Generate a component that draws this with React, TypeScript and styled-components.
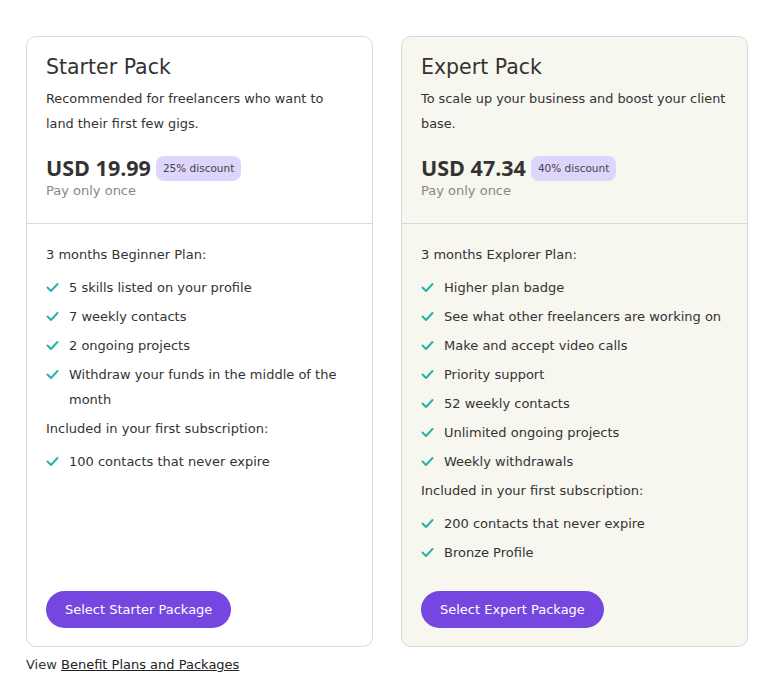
import React from "react";
import styled, { createGlobalStyle } from "styled-components";

const Global = createGlobalStyle`
  html, body { margin: 0; padding: 0; background: #ffffff; }
  body { font-family: "DejaVu Sans", "Open Sans", sans-serif; color: #333; }
  * { box-sizing: border-box; }
`;

const Page = styled.div`
  padding: 36px 30px 0 26px;
  width: 778px;
`;

const Cards = styled.div`
  display: grid;
  grid-template-columns: 347px 347px;
  column-gap: 28px;
`;

const Card = styled.div<{ $tint?: boolean }>`
  display: flex;
  flex-direction: column;
  height: 611px;
  border: 1px solid #d9d9d9;
  border-radius: 10px;
  background: ${(p) => (p.$tint ? "#f7f6ef" : "#ffffff")};
`;

const Head = styled.div`
  padding: 16px 19px 22px;
  border-bottom: 1px solid #d9d9d9;
`;

const Title = styled.h2`
  margin: 0;
  font-size: 20.5px;
  font-weight: 400;
  line-height: 28px;
  color: #333;
`;

const Desc = styled.p`
  margin: 5px 0 0;
  font-size: 12.85px;
  line-height: 25px;
  color: #333;
`;

const PriceRow = styled.div`
  display: flex;
  align-items: center;
  gap: 5px;
  margin-top: 19px;
`;

const Price = styled.span`
  font-family: "Open Sans", sans-serif;
  font-size: 21.5px;
  font-weight: 700;
  color: #333;
  line-height: 26px;
`;

const Badge = styled.span`
  background: #ddd5fc;
  border-radius: 8px;
  padding: 4px 7px;
  font-size: 10.5px;
  line-height: 17px;
  color: #444;
`;

const Sub = styled.div`
  font-size: 13px;
  color: #888;
  line-height: 20px;
`;

const Body = styled.div`
  flex: 1;
  display: flex;
  flex-direction: column;
  padding: 18px 19px 18px;
`;

const Section = styled.div`
  font-size: 13px;
  line-height: 25px;
  color: #333;
  margin-bottom: 8px;
`;

const List = styled.ul`
  list-style: none;
  margin: 0 0 4px;
  padding: 0;
  display: flex;
  flex-direction: column;
  gap: 4px;
`;

const Item = styled.li`
  display: flex;
  gap: 10px;
  font-size: 13px;
  line-height: 25px;
  color: #333;
`;

const Check = styled.svg`
  flex: none;
  width: 13px;
  height: 25px;
`;

const Spacer = styled.div`
  flex: 1;
`;

const Button = styled.button`
  align-self: flex-start;
  background: #7546e0;
  color: #fff;
  border: none;
  border-radius: 19px;
  height: 37px;
  padding: 0 19px;
  font-family: inherit;
  font-size: 13px;
  font-weight: 400;
`;

const Footer = styled.div`
  margin-top: 8px;
  font-size: 13px;
  color: #333;
  line-height: 20px;
`;

const Link = styled.a`
  color: #222;
  text-decoration: underline;
`;

const Tick = () => (
  <Check viewBox="0 0 13 25">
    <path d="M1.5 12.5 L5 16 L11.5 9" fill="none" stroke="#26b3a8" strokeWidth="2" strokeLinecap="round" strokeLinejoin="round" />
  </Check>
);

type Plan = {
  title: string;
  desc: string;
  price: string;
  discount: string;
  section: string;
  items: string[];
  extras: string[];
  button: string;
  tint?: boolean;
};

const plans: Plan[] = [
  {
    title: "Starter Pack",
    desc: "Recommended for freelancers who want to land their first few gigs.",
    price: "USD 19.99",
    discount: "25% discount",
    section: "3 months Beginner Plan:",
    items: [
      "5 skills listed on your profile",
      "7 weekly contacts",
      "2 ongoing projects",
      "Withdraw your funds in the middle of the month",
    ],
    extras: ["100 contacts that never expire"],
    button: "Select Starter Package",
  },
  {
    title: "Expert Pack",
    desc: "To scale up your business and boost your client base.",
    price: "USD 47.34",
    discount: "40% discount",
    section: "3 months Explorer Plan:",
    items: [
      "Higher plan badge",
      "See what other freelancers are working on",
      "Make and accept video calls",
      "Priority support",
      "52 weekly contacts",
      "Unlimited ongoing projects",
      "Weekly withdrawals",
    ],
    extras: ["200 contacts that never expire", "Bronze Profile"],
    button: "Select Expert Package",
    tint: true,
  },
];

export default function App() {
  return (
    <Page>
      <Global />
      <Cards>
        {plans.map((p) => (
          <Card key={p.title} $tint={p.tint}>
            <Head>
              <Title>{p.title}</Title>
              <Desc>{p.desc}</Desc>
              <PriceRow>
                <Price>{p.price}</Price>
                <Badge>{p.discount}</Badge>
              </PriceRow>
              <Sub>Pay only once</Sub>
            </Head>
            <Body>
              <Section>{p.section}</Section>
              <List>
                {p.items.map((i) => (
                  <Item key={i}>
                    <Tick />
                    <span>{i}</span>
                  </Item>
                ))}
              </List>
              <Section>Included in your first subscription:</Section>
              <List>
                {p.extras.map((i) => (
                  <Item key={i}>
                    <Tick />
                    <span>{i}</span>
                  </Item>
                ))}
              </List>
              <Spacer />
              <Button>{p.button}</Button>
            </Body>
          </Card>
        ))}
      </Cards>
      <Footer>
        View <Link href="#">Benefit Plans and Packages</Link>
      </Footer>
    </Page>
  );
}
